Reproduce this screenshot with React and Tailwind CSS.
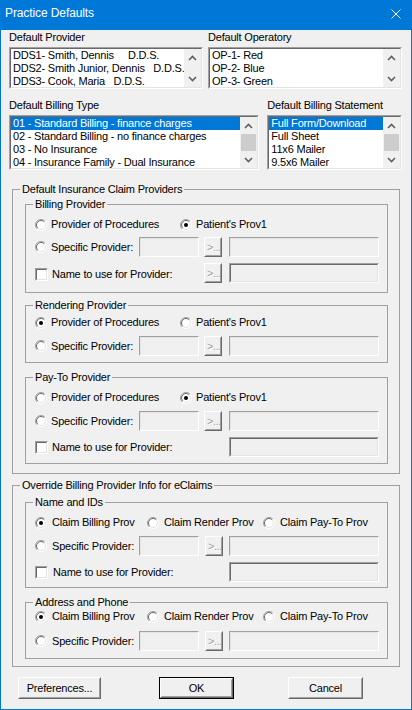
import React from "react";

function Radio({ checked }) {
  return (
    <svg width="12" height="12" viewBox="0 0 12 12" className="shrink-0">
      <circle cx="6" cy="6" r="5.5" fill="#fff" />
      <path d="M2.1 9.9 A5.5 5.5 0 0 1 9.9 2.1" fill="none" stroke="#a0a0a0" strokeWidth="1" />
      <path d="M9.9 2.1 A5.5 5.5 0 0 1 2.1 9.9" fill="none" stroke="#fff" strokeWidth="1" />
      <path d="M2.8 9.2 A4.5 4.5 0 0 1 9.2 2.8" fill="none" stroke="#696969" strokeWidth="1" />
      <path d="M9.2 2.8 A4.5 4.5 0 0 1 2.8 9.2" fill="none" stroke="#e3e3e3" strokeWidth="1" />
      {checked && <circle cx="6" cy="6" r="2" fill="#000" />}
    </svg>
  );
}

function Check() {
  return (
    <div className="h-[13px] w-[13px] shrink-0 border border-t-[#a0a0a0] border-l-[#a0a0a0] border-r-white border-b-white">
      <div className="h-full w-full border border-t-[#696969] border-l-[#696969] border-r-[#e3e3e3] border-b-[#e3e3e3] bg-white" />
    </div>
  );
}

function Field({ className = "", dark }) {
  return (
    <div className={`h-[20px] shrink-0 border border-t-[#a0a0a0] border-l-[#a0a0a0] border-r-white border-b-white ${className}`}>
      <div
        className={
          dark
            ? "h-full w-full border border-t-[#696969] border-l-[#696969] border-r-[#e3e3e3] border-b-[#e3e3e3] bg-[#f0f0f0]"
            : "h-full w-full border border-t-[#e3e3e3] border-l-[#e3e3e3] border-r-[#f0f0f0] border-b-[#f0f0f0] bg-[#f0f0f0]"
        }
      />
    </div>
  );
}

function Dots({ className = "" }) {
  return (
    <div className={`h-[20px] w-[18px] shrink-0 border border-t-white border-l-white border-r-[#696969] border-b-[#696969] ${className}`}>
      <div className="flex h-full w-full items-center overflow-hidden border border-t-[#f0f0f0] border-l-[#f0f0f0] border-r-[#a0a0a0] border-b-[#a0a0a0] bg-[#f0f0f0] pl-[1px] text-[11px] leading-none tracking-[-0.4px] text-[#a0a0a0] [text-shadow:1px_1px_0_#fff]">
        &gt;...
      </div>
    </div>
  );
}

function Chevron({ up }) {
  return (
    <svg width="9" height="6" viewBox="0 0 9 6">
      <path
        d={up ? "M1 5 L4.5 1.5 L8 5" : "M1 1 L4.5 4.5 L8 1"}
        fill="none"
        stroke="#606060"
        strokeWidth="1.6"
      />
    </svg>
  );
}

function Scrollbar({ thumb }) {
  return (
    <div className="flex w-[17px] shrink-0 flex-col bg-[#f0f0f0]">
      <div className="flex h-[17px] items-center justify-center">
        <Chevron up />
      </div>
      <div className="flex-1 px-[1px]">{thumb && <div className="h-full bg-[#cdcdcd]" />}</div>
      <div className="flex h-[17px] items-center justify-center">
        <Chevron />
      </div>
    </div>
  );
}

function ListBox({ className = "", items, selected, thumb }) {
  return (
    <div className={`border border-t-[#a0a0a0] border-l-[#a0a0a0] border-r-white border-b-white ${className}`}>
      <div className="flex h-full border border-t-[#696969] border-l-[#696969] border-r-[#e3e3e3] border-b-[#e3e3e3] bg-white">
        <div className="min-w-0 flex-1 overflow-hidden">
          {items.map((it, i) => (
            <div
              key={i}
              className={
                i === selected
                  ? "h-[13px] whitespace-pre bg-[#0078d7] pl-[2px] text-white"
                  : "h-[13px] whitespace-pre pl-[2px]"
              }
            >
              {it}
            </div>
          ))}
        </div>
        <Scrollbar thumb={thumb} />
      </div>
    </div>
  );
}

function Group({ title, className = "", children }) {
  return (
    <fieldset className={`min-w-0 border border-[#a0a0a0] ${className}`}>
      <legend className="ml-[7px] px-[2px] leading-[13px]">{title}</legend>
      {children}
    </fieldset>
  );
}

function Opt({ checked, label, className = "", gap = "ml-[4px]" }) {
  return (
    <div className={`flex items-center ${className}`}>
      <Radio checked={checked} />
      <span className={gap}>{label}</span>
    </div>
  );
}

export default function App() {
  return (
    <div className="h-[710px] w-[412px] border-x border-b border-[#0078d7] bg-[#f0f0f0] font-['Liberation_Sans',Arial,sans-serif] text-[11px] leading-[13px] tracking-[-0.2px] text-black">
      {/* title bar */}
      <div className="flex h-[30px] items-center justify-between bg-[#0078d7] pb-[3px] pl-[4px] pr-[10px] text-[12px] tracking-[-0.1px] text-white">
        <span>Practice Defaults</span>
        <svg width="10" height="10" viewBox="0 0 10 10">
          <path d="M0.5 0.5 L9.5 9.5 M9.5 0.5 L0.5 9.5" stroke="#fff" strokeWidth="1" />
        </svg>
      </div>

      <div className="pl-[8px] pr-[9px]">
        {/* top lists */}
        <div className="flex gap-[5px]">
          <div className="w-[194px]">
            <div className="mt-[1px]">Default Provider</div>
            <ListBox
              className="mt-[3px] h-[42px]"
              items={[
                "DDS1- Smith, Dennis     D.D.S.",
                "DDS2- Smith Junior, Dennis   D.D.S.",
                "DDS3- Cook, Maria   D.D.S.",
              ]}
            />
          </div>
          <div className="w-[194px]">
            <div className="mt-[1px]">Default Operatory</div>
            <ListBox className="mt-[3px] h-[42px]" items={["OP-1- Red", "OP-2- Blue", "OP-3- Green"]} />
          </div>
        </div>

        <div className="mt-[10px] flex">
          <div className="w-[251px]">
            <div>Default Billing Type</div>
            <ListBox
              className="mt-[3px] h-[55px]"
              selected={0}
              thumb
              items={[
                "01 - Standard Billing - finance charges",
                "02 - Standard Billing - no finance charges",
                "03 - No Insurance",
                "04 - Insurance Family - Dual Insurance",
              ]}
            />
          </div>
          <div className="ml-[8px] w-[135px]">
            <div>Default Billing Statement</div>
            <ListBox
              className="mt-[3px] h-[55px]"
              selected={0}
              thumb
              items={["Full Form/Download", "Full Sheet", "11x6 Mailer", "9.5x6 Mailer"]}
            />
          </div>
        </div>

        {/* Default Insurance Claim Providers */}
        <Group title="Default Insurance Claim Providers" className="ml-[3px] mt-[13px] w-[388px]">
          <div className="pb-[9px] pl-[12px] pr-[11px]">
            <Group title="Billing Provider" className="mt-[2px]">
              <div className="pb-[9px] pl-[9px]">
                <div className="mt-[3px] flex h-[21px] items-center">
                  <Opt label="Provider of Procedures" className="w-[145px]" />
                  <Opt checked label="Patient's Prov1" />
                </div>
                <div className="mt-[2px] flex h-[20px] items-center">
                  <Opt label="Specific Provider:" className="w-[104px]" />
                  <Field className="w-[60px]" />
                  <Dots className="ml-[5px]" />
                  <Field className="ml-[7px] w-[150px]" />
                </div>
                <div className="mt-[6px] flex h-[20px] items-center">
                  <div className="flex w-[169px] items-center pt-[3px]">
                    <Check />
                    <span className="ml-[4px]">Name to use for Provider:</span>
                  </div>
                  <Dots />
                  <Field dark className="ml-[7px] w-[150px]" />
                </div>
              </div>
            </Group>

            <Group title="Rendering Provider" className="mt-[6px]">
              <div className="pb-[6px] pl-[9px]">
                <div className="flex h-[21px] items-center">
                  <Opt checked label="Provider of Procedures" className="w-[145px]" />
                  <Opt label="Patient's Prov1" />
                </div>
                <div className="mt-[3px] flex h-[20px] items-center">
                  <Opt label="Specific Provider:" className="w-[104px]" />
                  <Field className="w-[60px]" />
                  <Dots className="ml-[5px]" />
                  <Field className="ml-[7px] w-[150px]" />
                </div>
              </div>
            </Group>

            <Group title="Pay-To Provider" className="mt-[8px]">
              <div className="pb-[6px] pl-[9px]">
                <div className="mt-[3px] flex h-[21px] items-center">
                  <Opt label="Provider of Procedures" className="w-[145px]" />
                  <Opt checked label="Patient's Prov1" />
                </div>
                <div className="mt-[3px] flex h-[20px] items-center">
                  <Opt label="Specific Provider:" className="w-[104px]" />
                  <Field className="w-[60px]" />
                  <Dots className="ml-[5px]" />
                  <Field className="ml-[7px] w-[150px]" />
                </div>
                <div className="mt-[6px] flex h-[20px] items-center">
                  <div className="flex w-[194px] items-center">
                    <Check />
                    <span className="ml-[4px]">Name to use for Provider:</span>
                  </div>
                  <Field dark className="w-[150px]" />
                </div>
              </div>
            </Group>
          </div>
        </Group>

        {/* Override Billing Provider Info for eClaims */}
        <Group title="Override Billing Provider Info for eClaims" className="ml-[3px] mt-[5px] w-[388px]">
          <div className="pb-[7px] pl-[12px] pr-[11px]">
            <Group title="Name and IDs" className="mt-[4px]">
              <div className="pb-[5px] pl-[9px]">
                <div className="mt-[3px] flex h-[21px] items-center">
                  <Opt checked gap="ml-[5px]" label="Claim Billing Prov" className="w-[112px]" />
                  <Opt gap="ml-[5px]" label="Claim Render Prov" className="w-[116px]" />
                  <Opt gap="ml-[5px]" label="Claim Pay-To Prov" />
                </div>
                <div className="mt-[3px] flex h-[20px] items-center">
                  <Opt gap="ml-[5px]" label="Specific Provider:" className="w-[104px]" />
                  <Field className="w-[60px]" />
                  <Dots className="ml-[6px]" />
                  <Field className="ml-[6px] w-[150px]" />
                </div>
                <div className="mt-[6px] flex h-[20px] items-center">
                  <div className="flex w-[194px] items-center">
                    <Check />
                    <span className="ml-[5px]">Name to use for Provider:</span>
                  </div>
                  <Field dark className="w-[150px]" />
                </div>
              </div>
            </Group>

            <Group title="Address and Phone" className="mt-[8px]">
              <div className="pb-[7px] pl-[9px]">
                <div className="flex h-[15px] items-center">
                  <Opt checked gap="ml-[5px]" label="Claim Billing Prov" className="w-[112px]" />
                  <Opt gap="ml-[5px]" label="Claim Render Prov" className="w-[116px]" />
                  <Opt gap="ml-[5px]" label="Claim Pay-To Prov" />
                </div>
                <div className="mt-[7px] flex h-[20px] items-center">
                  <Opt gap="ml-[5px]" label="Specific Provider:" className="w-[104px]" />
                  <Field className="w-[60px]" />
                  <Dots className="ml-[6px]" />
                  <Field className="ml-[6px] w-[150px]" />
                </div>
              </div>
            </Group>
          </div>
        </Group>

        {/* buttons */}
        <div className="mt-[10px] flex h-[22px]">
          <button className="ml-[9px] w-[83px] border border-t-white border-l-white border-r-[#696969] border-b-[#696969] bg-[#f0f0f0]">
            <div className="flex h-full items-center justify-center border border-t-[#f0f0f0] border-l-[#f0f0f0] border-r-[#a0a0a0] border-b-[#a0a0a0]">
              Preferences...
            </div>
          </button>
          <button className="ml-[58px] w-[75px] border border-[#000] bg-[#f0f0f0]">
            <div className="h-full border border-t-white border-l-white border-r-[#696969] border-b-[#696969]">
              <div className="flex h-full items-center justify-center border border-t-[#f0f0f0] border-l-[#f0f0f0] border-r-[#a0a0a0] border-b-[#a0a0a0]">
                OK
              </div>
            </div>
          </button>
          <button className="ml-[54px] w-[75px] border border-t-white border-l-white border-r-[#696969] border-b-[#696969] bg-[#f0f0f0]">
            <div className="flex h-full items-center justify-center border border-t-[#f0f0f0] border-l-[#f0f0f0] border-r-[#a0a0a0] border-b-[#a0a0a0]">
              Cancel
            </div>
          </button>
        </div>
      </div>
    </div>
  );
}
